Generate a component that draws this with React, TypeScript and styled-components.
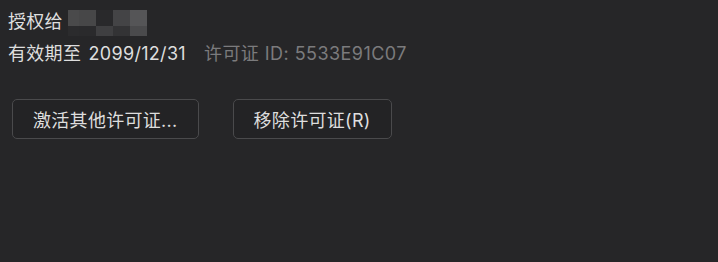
import styled, { createGlobalStyle } from 'styled-components';

const GlobalStyle = createGlobalStyle`
  html, body {
    margin: 0;
    padding: 0;
    background: #262628;
  }
  body {
    font-family: Inter, "Noto Sans CJK SC", sans-serif;
    -webkit-font-smoothing: antialiased;
  }
`;

// pixelated name mask: [row][col] colours
const maskCells = [
  ['#4a4a4b', '#474748', '#29292b', '#444446', '#555557'],
  ['#2b2b2d', '#2a2a2c', '#3f3f41', '#333335', '#4a4a4c'],
];
const maskWidths = [11, 17, 17, 17, 17];

export default function App() {
  return (
    <Page>
      <GlobalStyle />
      <Line>
        <span>授权给</span>
        <Mask>
          {maskCells.map((row, r) => (
            <MaskRow key={r} $tall={r === 0}>
              {row.map((c, i) => (
                <Cell key={i} style={{ background: c, width: maskWidths[i] }} />
              ))}
            </MaskRow>
          ))}
        </Mask>
      </Line>
      <Line>
        <Expiry>有效期至 2099/12/31</Expiry>
        <Muted>许可证 ID: 5533E91C07</Muted>
      </Line>

      <Buttons>
        <Button>激活其他许可证...</Button>
        <Button>移除许可证(R)</Button>
      </Buttons>
    </Page>
  );
}

const Page = styled.div`
  width: 718px;
  height: 262px;
  box-sizing: border-box;
  padding: 4px 0 0 8px;
  color: #dedede;
  font-size: 18px;
  letter-spacing: 0.3px;
`;

const Line = styled.div`
  display: flex;
  align-items: center;
  height: 32px;
  white-space: nowrap;
`;

const Expiry = styled.span`
  word-spacing: 2px;
`;

const Mask = styled.div`
  display: flex;
  flex-direction: column;
  align-self: flex-start;
  margin-left: 5px;
  margin-top: 6px;
`;

const MaskRow = styled.div<{ $tall: boolean }>`
  display: flex;
  height: ${(p) => (p.$tall ? '16px' : '10px')};
`;

const Cell = styled.div`
  height: 100%;
`;

const Muted = styled.span`
  color: #7b7b7d;
  margin-left: 18px;
  letter-spacing: 0.45px;
`;

const Buttons = styled.div`
  display: flex;
  gap: 34px;
  margin-top: 31px;
  margin-left: 4px;
`;

const Button = styled.button`
  height: 40px;
  padding: 0 20px;
  background: #232325;
  border: 1px solid #4a4a4c;
  border-radius: 5px;
  color: #dedede;
  font-family: Inter, "Noto Sans CJK SC", sans-serif;
  font-size: 18px;
  letter-spacing: 0.3px;
`;
